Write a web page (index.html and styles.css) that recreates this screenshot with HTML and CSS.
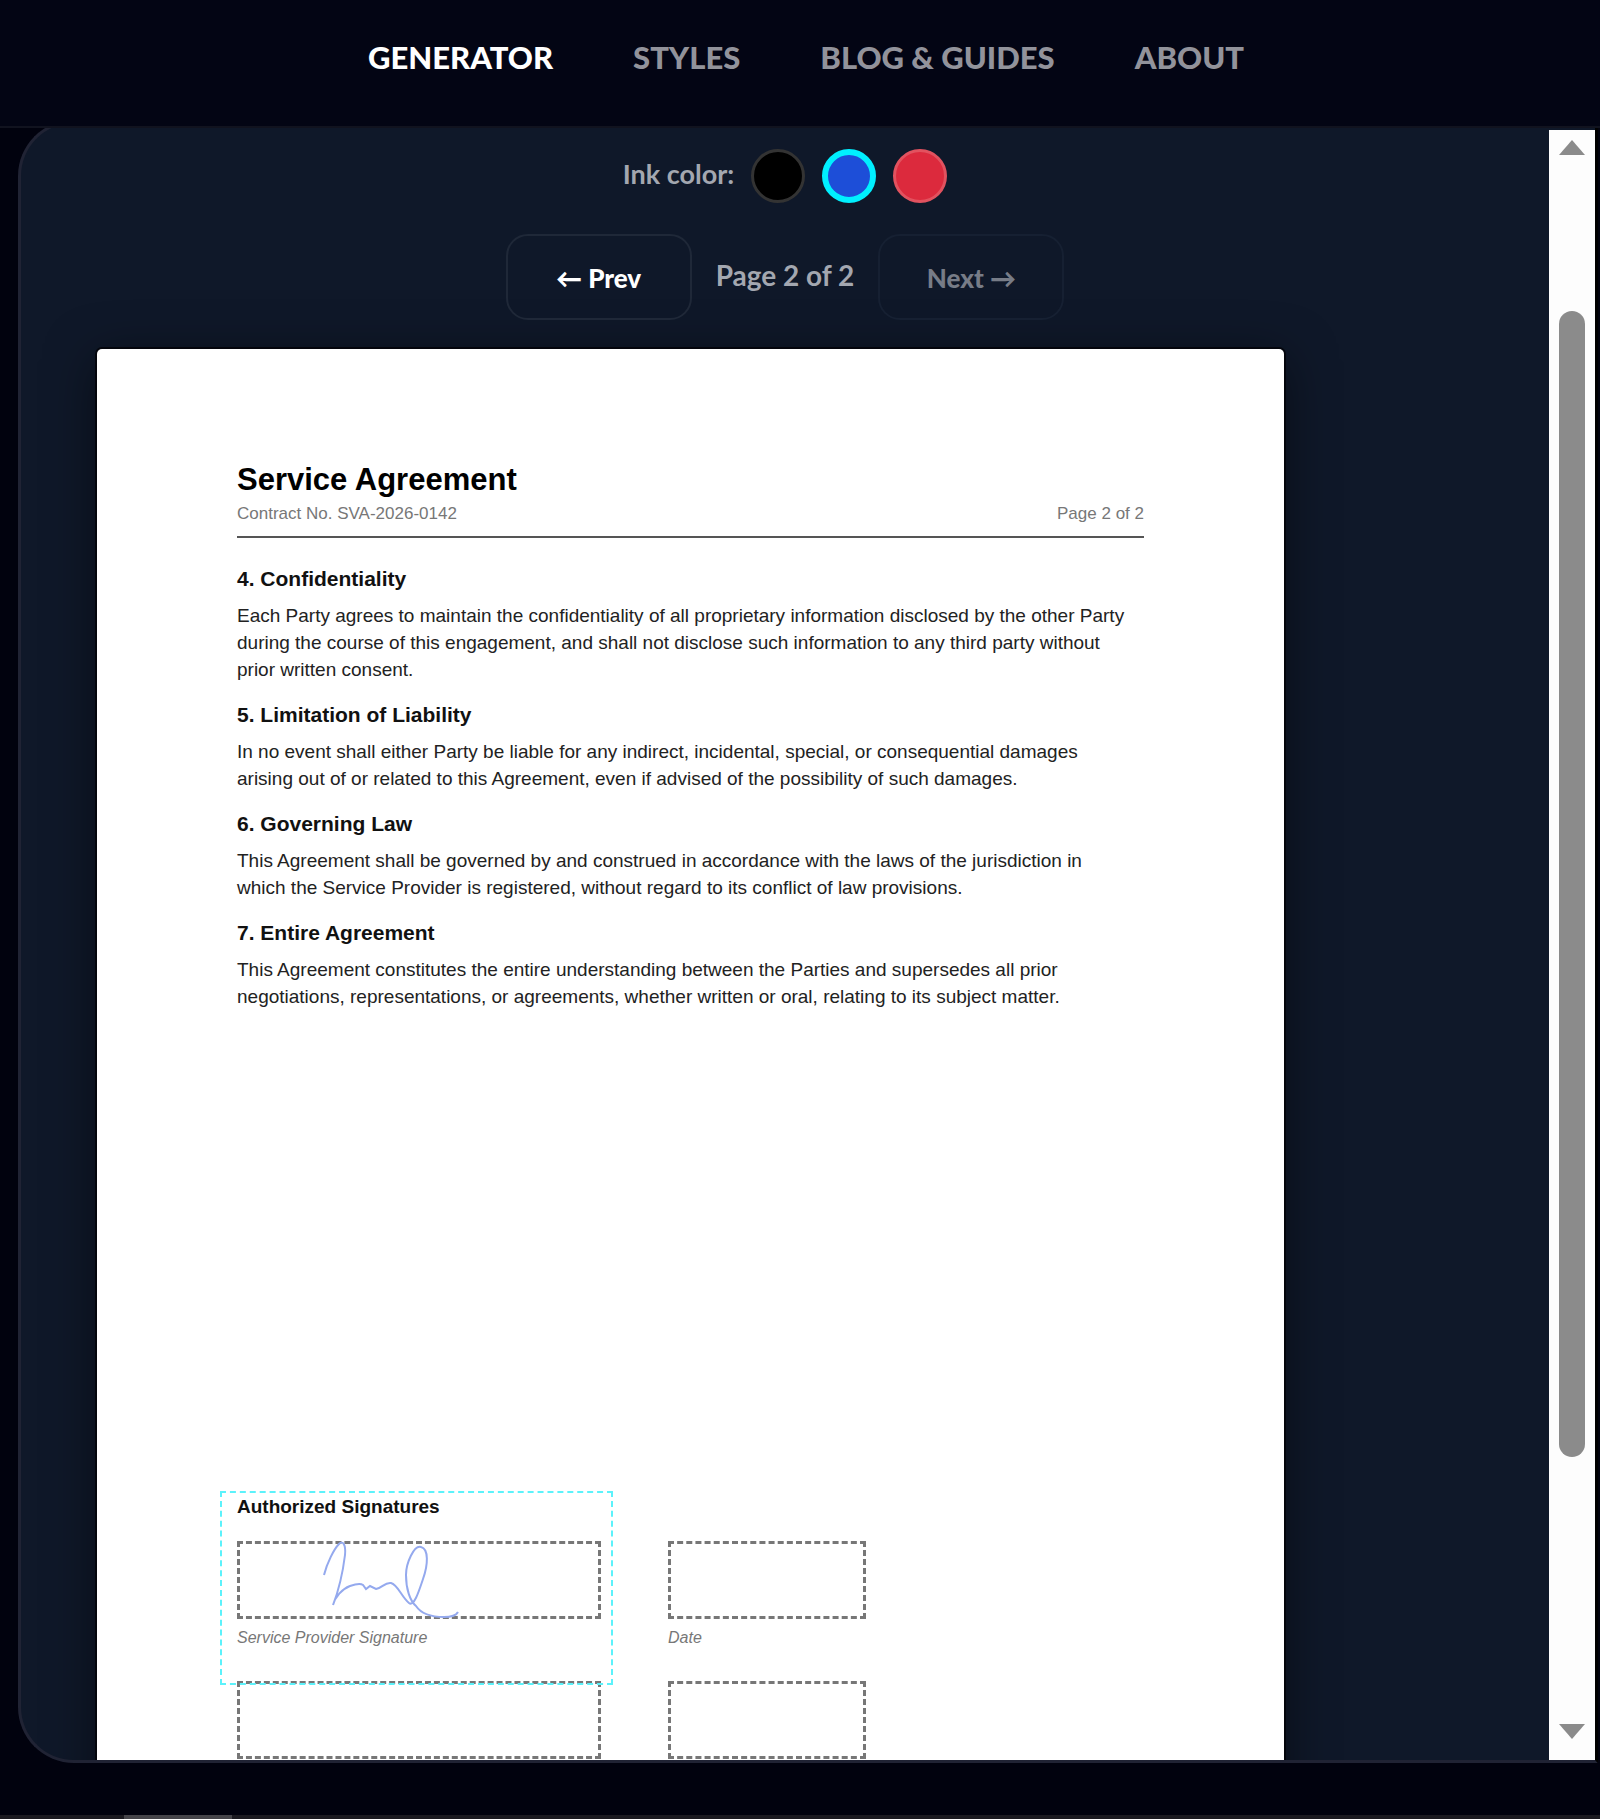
FILE: index.html
```html
<!DOCTYPE html>
<html lang="en">
<head>
<meta charset="utf-8">
<meta name="viewport" content="width=device-width, initial-scale=1">
<title>Service Agreement – Signature Generator</title>
<link rel="stylesheet" href="styles.css">
</head>
<body>
<header class="site-header">
  <nav class="site-nav">
    <a class="site-nav__link site-nav__link--active" href="#generator">GENERATOR</a>
    <a class="site-nav__link" href="#styles">STYLES</a>
    <a class="site-nav__link" href="#blog">BLOG &amp; GUIDES</a>
    <a class="site-nav__link" href="#about">ABOUT</a>
  </nav>
</header>

<main class="viewer">
  <div class="viewer__content">
    <div class="ink" role="radiogroup" aria-labelledby="ink-label">
      <span class="ink__label" id="ink-label">Ink color:</span>
      <input class="swatch swatch--black" type="radio" name="ink" aria-label="Black">
      <input class="swatch swatch--blue" type="radio" name="ink" aria-label="Blue" checked>
      <input class="swatch swatch--red" type="radio" name="ink" aria-label="Red">
    </div>
    <div class="pager">
      <button class="pager__button" type="button">← Prev</button>
      <span class="pager__status">Page 2 of 2</span>
      <button class="pager__button" type="button" disabled>Next →</button>
    </div>

    <article class="paper">
      <header class="paper__header">
        <h1 class="paper__title">Service Agreement</h1>
        <div class="paper__meta"><span>Contract No. SVA-2026-0142</span><span>Page 2 of 2</span></div>
      </header>
      <section class="clause">
        <h2 class="clause__title">4. Confidentiality</h2>
        <p class="clause__text">Each Party agrees to maintain the confidentiality of all proprietary information disclosed by the other Party<br>during the course of this engagement, and shall not disclose such information to any third party without<br>prior written consent.</p>
      </section>
      <section class="clause">
        <h2 class="clause__title">5. Limitation of Liability</h2>
        <p class="clause__text">In no event shall either Party be liable for any indirect, incidental, special, or consequential damages<br>arising out of or related to this Agreement, even if advised of the possibility of such damages.</p>
      </section>
      <section class="clause">
        <h2 class="clause__title">6. Governing Law</h2>
        <p class="clause__text">This Agreement shall be governed by and construed in accordance with the laws of the jurisdiction in<br>which the Service Provider is registered, without regard to its conflict of law provisions.</p>
      </section>
      <section class="clause">
        <h2 class="clause__title">7. Entire Agreement</h2>
        <p class="clause__text">This Agreement constitutes the entire understanding between the Parties and supersedes all prior<br>negotiations, representations, or agreements, whether written or oral, relating to its subject matter.</p>
      </section>
      <section class="signoff">
        <h2 class="signoff__title">Authorized Signatures</h2>
        <div class="signoff__grid">
          <div class="field"><div class="field__box"></div><span class="field__caption">Service Provider Signature</span></div>
          <div class="field"><div class="field__box"></div><span class="field__caption">Date</span></div>
          <div class="field"><div class="field__box"></div></div>
          <div class="field"><div class="field__box"></div></div>
        </div>
        <div class="placement">
          <svg class="placement__ink" viewBox="0 0 140 78" role="img" aria-label="Signature">
            <path d="M2 34 C5 22 12 8 17 3 C21 -1 24 4 23 14 C21 30 18 46 11 64 C13 56 20 48 28 45 C34 43 38 42 41 44 L44 48 L48 45 L54 48 C60 47 63 41 69 42 C76 44 79 55 87 62 C92 66 97 50 101 38 C106 24 107 8 99 6 C92 4 84 22 84 34 C84 48 88 60 94 65 C100 74 110 76 122 76 C129 76 134 75 136 71"/>
          </svg>
        </div>
      </section>
    </article>
  </div>

  <div class="scrollbar" aria-hidden="true">
    <svg class="scrollbar__arrow" viewBox="0 0 26 15"><path d="M13 0 26 15H0z"/></svg>
    <div class="scrollbar__track"><div class="scrollbar__thumb"></div></div>
    <svg class="scrollbar__arrow" viewBox="0 0 26 15"><path d="M0 0H26L13 15z"/></svg>
  </div>
</main>

<footer class="page-end"><div class="page-end__tab"></div></footer>
</body>
</html>
```
FILE: styles.css
```css
* { box-sizing: border-box; }

body {
  display: flex;
  flex-direction: column;
  height: 100vh;
  margin: 0;
  background: #01020e;
  font-family: Lato, sans-serif;
  color: #a3a7b0;
}

.site-header {
  position: relative;
  z-index: 2;
  flex: none;
  padding: 37px 0 49px 12px;
  background: #030514;
  border-bottom: 2px solid #11131f;
}

.site-nav {
  display: flex;
  justify-content: center;
  gap: 80px;
}

.site-nav__link {
  color: #92939b;
  font-size: 31px;
  font-weight: 900;
  line-height: 40px;
  text-decoration: none;
  white-space: nowrap;
}

.site-nav__link--active { color: #fff; }

.viewer {
  display: flex;
  flex: 1;
  min-height: 0;
  margin: -8px 2px 0 18px;
  padding-top: 7px;
  overflow: hidden;
  background: #0f1829;
  border: 3px solid #202334;
  border-right-color: #000;
  border-radius: 56px 0 0 56px;
}

.viewer__content {
  flex: 1;
  min-width: 0;
  padding: 19px 76px 0;
}

.ink {
  display: flex;
  align-items: center;
  justify-content: center;
  gap: 17px;
}

.ink__label,
.pager__status {
  padding-bottom: 4px;
  font-size: 27px;
  font-weight: 700;
  line-height: 36px;
  white-space: nowrap;
}

.swatch {
  appearance: none;
  width: 54px;
  height: 54px;
  margin: 0;
  border: 3px solid #333;
  border-radius: 50%;
}

.swatch--black { background: #000; }
.swatch--blue { background: #1d4ed8; }
.swatch--red { background: #dc2a3d; border-color: #e2525f; }
.swatch:checked { border: 6px solid #00f0ff; }

.pager {
  display: flex;
  align-items: center;
  justify-content: center;
  gap: 24px;
  margin-top: 31px;
}

.pager__status { font-size: 28px; }

.pager__button {
  width: 186px;
  height: 86px;
  padding: 2px 0 0;
  background: transparent;
  border: 2px solid #1f2838;
  border-radius: 22px;
  color: #fff;
  font: 900 26px/32px Lato, sans-serif;
}

.pager__button:disabled {
  border-color: #162032;
  color: #777c87;
}

.paper {
  max-width: 1187px;
  min-height: 1440px;
  margin-top: 29px;
  padding: 108px 140px 0;
  background: #fff;
  border-radius: 5px;
  box-shadow: 0 10px 50px rgba(0, 0, 0, .5), 0 0 0 2px #05070f;
  color: #222;
  font-family: "Liberation Sans", Arial, sans-serif;
}

.paper__header {
  padding-bottom: 10px;
  border-bottom: 2px solid #555;
}

.paper__title {
  margin: 0;
  color: #000;
  font-size: 31px;
  line-height: 45px;
}

.paper__meta {
  display: flex;
  justify-content: space-between;
  color: #777;
  font-size: 17px;
  line-height: 24px;
}

.clause { margin-top: 16px; }
.paper__header + .clause { margin-top: 25px; }

.clause__title {
  margin: 0;
  color: #111;
  font-size: 21px;
  line-height: 32px;
}

.clause__text {
  margin: 7px 0 0;
  font-size: 19px;
  line-height: 27px;
}

.signoff {
  position: relative;
  margin-top: 481px;
}

.signoff__title {
  margin: 0;
  color: #111;
  font-size: 19px;
  line-height: 32px;
}

.signoff__grid {
  display: grid;
  grid-template-columns: 364px 198px;
  column-gap: 67px;
  grid-auto-rows: 140px;
  margin-top: 18px;
}

.field__box {
  height: 78px;
  border: 3px dashed #777;
}

.field__caption {
  display: block;
  margin-top: 8px;
  color: #777;
  font-size: 16px;
  font-style: italic;
  line-height: 22px;
}

.placement {
  position: absolute;
  top: 0;
  left: -17px;
  width: 393px;
  height: 194px;
  border: 2px dashed #5cf2fb;
}

.placement__ink {
  position: absolute;
  top: 48px;
  left: 100px;
  width: 140px;
  height: 78px;
  fill: none;
  stroke: #94a9ee;
  stroke-width: 2;
}

.scrollbar {
  display: flex;
  flex-direction: column;
  align-items: center;
  gap: 20px;
  width: 46px;
  padding: 10px 0 21px;
  background: #fdfdfd;
}

.scrollbar__arrow {
  flex: none;
  width: 26px;
  height: 15px;
  fill: #8b8b8b;
}

.scrollbar__track {
  display: flex;
  flex: 1;
  flex-direction: column;
}

.scrollbar__track::before { content: ""; flex: 136; }
.scrollbar__track::after { content: ""; flex: 247; }

.scrollbar__thumb {
  flex: 1147;
  width: 26px;
  background: #8b8b8b;
  border-radius: 13px;
}

.page-end {
  flex: none;
  margin-top: 52px;
  padding-left: 124px;
  background: #1b1a20;
}

.page-end__tab {
  width: 108px;
  height: 4px;
  background: #454449;
}
```
